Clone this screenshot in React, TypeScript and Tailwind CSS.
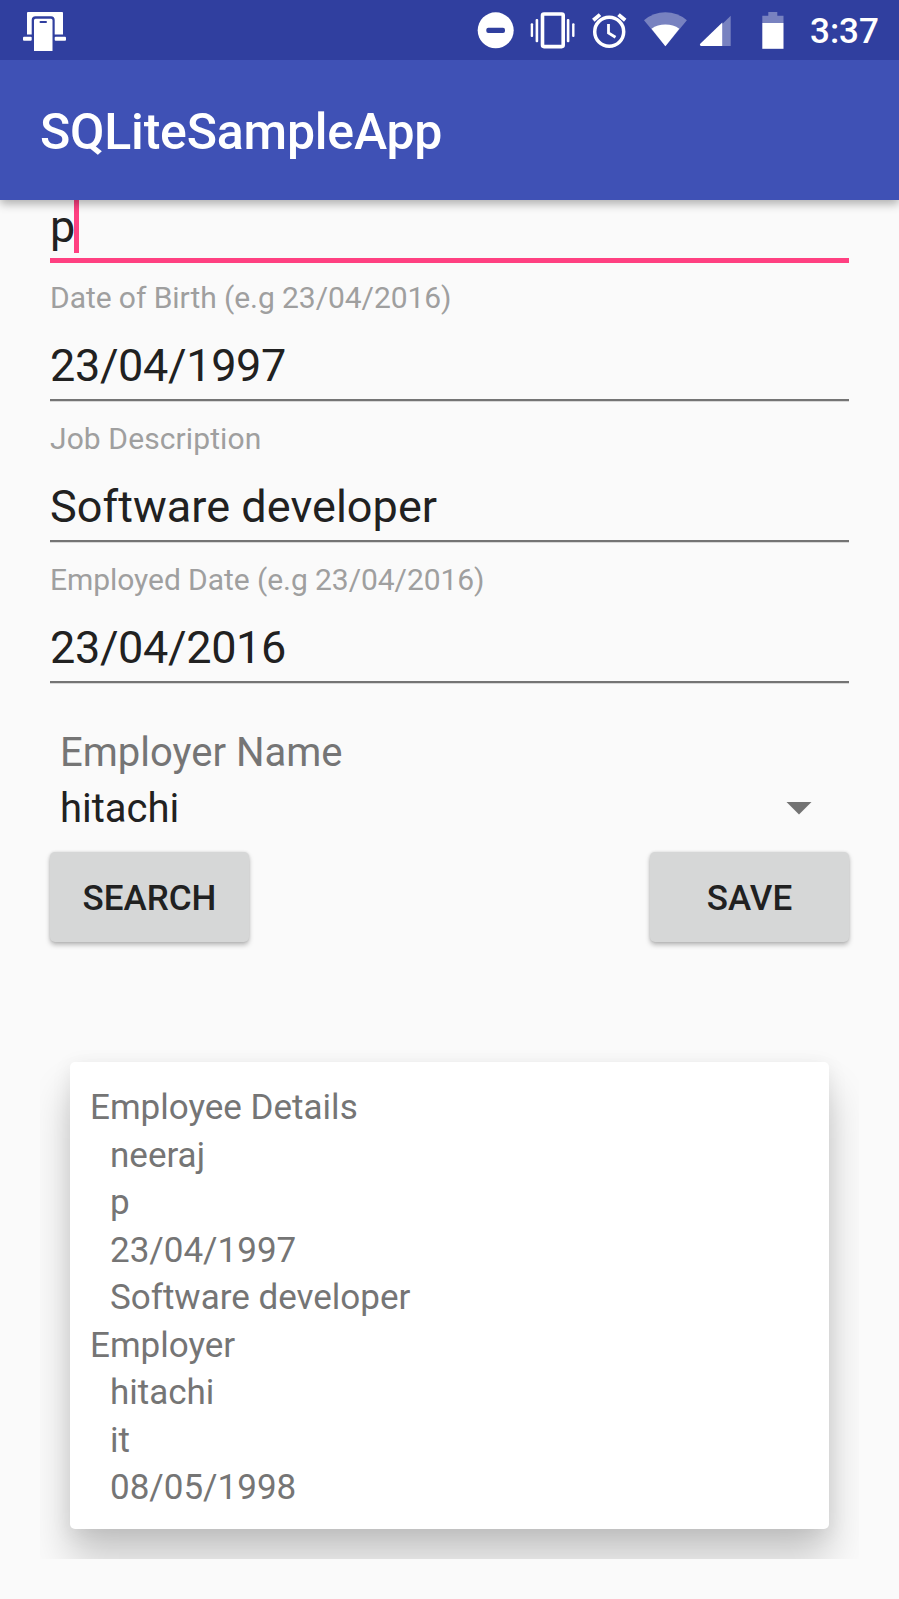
type FieldProps = { label: string; value: string; className?: string; labelClassName?: string; valueClassName?: string };

function Field({
  label,
  value,
  className = "pt-[19px]",
  labelClassName = "tracking-[-0.06px]",
  valueClassName = "tracking-[-0.35px]",
}: FieldProps) {
  return (
    <div className={className}>
      <div className={`text-[30px] leading-[36px] text-[#9f9f9f] ${labelClassName}`}>{label}</div>
      <div className={`mt-[23px] text-[45px] leading-[54px] text-[#212121] ${valueClassName}`}>{value}</div>
      <div className="mt-[6px] h-[2px] bg-[#747474]" />
      <div className="h-px bg-[#d8d8d8]" />
    </div>
  );
}

function StatusBar() {
  return (
    <div className="flex h-[60px] items-center bg-[#303f9f] text-white">
      <svg className="ml-[20px] h-[60px] w-[50px]" viewBox="20 0 50 60" fill="currentColor">
        <path d="M28 12H62.200Q63 12 63 13V34.600H54.700V20Q54.700 16.200 51 16.200H35.500Q31.700 16.200 31.700 20V34.600H27V13Q27 12 28 12Z" />
        <path
          fillRule="evenodd"
          d="M35.500 18.800H51Q52.500 18.800 52.500 20.300V51H34V20.300Q34 18.800 35.500 18.800ZM40.500 21Q39.500 21 39.500 22T40.500 23H46Q47 23 47 22T46 21Z"
        />
        <rect x="23" y="36.700" width="8.700" height="4" rx="1" />
        <rect x="54.700" y="36.700" width="11.300" height="4" rx="1" />
      </svg>
      <div className="flex-1" />
      <svg className="h-[60px] w-[48px]" viewBox="474 0 48 60">
        <circle cx="495.700" cy="30.300" r="18" fill="currentColor" />
        <rect x="486.300" y="27.700" width="18.700" height="5.300" rx="2" fill="#303f9f" />
      </svg>
      <svg className="h-[60px] w-[62px]" viewBox="522 0 62 60" fill="currentColor">
        <rect x="542.500" y="14" width="20.700" height="32.600" rx="1.500" fill="none" stroke="currentColor" strokeWidth="3.600" />
        <rect x="530.700" y="23.300" width="2.400" height="13.800" rx="1" />
        <rect x="535.600" y="19" width="2.600" height="23.300" rx="1" />
        <rect x="566.800" y="19" width="2.600" height="23.300" rx="1" />
        <rect x="572.100" y="23.300" width="2.400" height="13.800" rx="1" />
      </svg>
      <svg className="h-[60px] w-[54px]" viewBox="584 0 54 60" fill="none" stroke="currentColor">
        <circle cx="609.200" cy="31.800" r="14.500" strokeWidth="3.500" />
        <path d="M593.300 20.300L600 14.600M625.200 20.300L618.500 14.600" strokeWidth="3.800" />
        <path d="M608.500 24V32.900L615.500 37.200" strokeWidth="2.800" />
      </svg>
      <svg className="h-[60px] w-[54px]" viewBox="638 0 54 60" fill="currentColor">
        <path d="M665.400 46.200L644 20.200Q653.500 12.300 665.400 12.300T686.900 20.200Z" opacity="0.350" />
        <path d="M665.400 46.200L651.500 28.800Q657.500 24.600 665.400 24.600T679.300 28.800Z" />
      </svg>
      <svg className="h-[60px] w-[54px]" viewBox="692 0 54 60" fill="currentColor">
        <path d="M722.300 24L730.700 15.700V46H722.300Z" opacity="0.350" />
        <path d="M722.300 22.500V46H701Q699 45 700.500 43.500Z" />
      </svg>
      <svg className="h-[60px] w-[64px]" viewBox="746 0 64 60" fill="currentColor">
        <path d="M762.300 15.700H768.300V12H777.300V15.700H783.500V23H762.300Z" opacity="0.350" />
        <rect x="762.300" y="23" width="21.200" height="25.800" />
      </svg>
      <span className="mr-[21px] mt-[4px] w-[68px] whitespace-nowrap text-[35px] font-medium leading-[42px]">3:37</span>
    </div>
  );
}

const details = [
  { title: "Employee Details", rows: ["neeraj", "p", "23/04/1997", "Software developer"] },
  { title: "Employer", rows: ["hitachi", "it", "08/05/1998"] },
];

const buttonClass =
  "h-[90px] w-[199px] rounded-[5px] bg-[#d6d7d7] pt-[4px] text-[35px] font-medium leading-[42px] text-[#212121] shadow-[0_3px_5px_rgba(0,0,0,0.26),0_0_3px_rgba(0,0,0,0.12)]";

export default function App() {
  return (
    <div className="flex h-[1599px] w-full flex-col overflow-hidden bg-[#fafafa] font-['Roboto',sans-serif]">
      <header className="relative z-10 shadow-[0_4px_9px_rgba(0,0,0,0.3)]">
        <StatusBar />
        <div className="flex h-[140px] items-center bg-[#3f51b5] px-[40px]">
          <h1 className="mt-[3px] text-[50px] font-medium leading-[60px] tracking-[-0.2px] text-white">SQLiteSampleApp</h1>
        </div>
      </header>

      <main className="flex flex-1 flex-col">
        <section className="px-[50px]">
          <div className="flex h-[58px] text-[45px] leading-[54px] text-[#212121]">
            <span className="w-[24px]">p</span>
            <span className="h-[53px] w-[5px] bg-[#ff4081]" />
          </div>
          <div className="h-[5px] bg-[#ff4081]" />
          <Field label="Date of Birth (e.g 23/04/2016)" value="23/04/1997" className="pt-[17px]" />
          <Field
            label="Job Description"
            value="Software developer"
            labelClassName="tracking-[0.1px]"
            valueClassName="tracking-[0.05px]"
          />
          <Field label="Employed Date (e.g 23/04/2016)" value="23/04/2016" />

          <div className="px-[10px] pt-[45px] text-[40px]">
            <div className="leading-[48px] text-[#757575]">Employer Name</div>
            <div className="mt-[8px] flex items-center justify-between leading-[48px] text-[#212121]">
              <span>hitachi</span>
              <svg className="mb-[2px] mr-[27px] h-[13px] w-[26px]" viewBox="0 0 26 13">
                <path d="M0.500 0H25.500L13 12.500Z" fill="#737373" />
              </svg>
            </div>
          </div>

          <div className="mt-[19px] flex justify-between">
            <button className={buttonClass}>SEARCH</button>
            <button className={buttonClass}>SAVE</button>
          </div>
        </section>

        <section className="mx-[40px] mt-[90px] overflow-hidden px-[30px] pb-[30px] pt-[30px]">
          <div className="h-[467px] rounded-[5px] bg-white pl-[20px] pt-[22px] text-[35px] leading-[47.500px] text-[#757575] shadow-[0_30px_40px_rgba(0,0,0,0.2),0_4px_20px_rgba(0,0,0,0.08)]">
            {details.map((group) => (
              <div key={group.title}>
                <div>{group.title}</div>
                {group.rows.map((row) => (
                  <div key={row} className="pl-[20px]">{row}</div>
                ))}
              </div>
            ))}
          </div>
        </section>
      </main>
    </div>
  );
}
